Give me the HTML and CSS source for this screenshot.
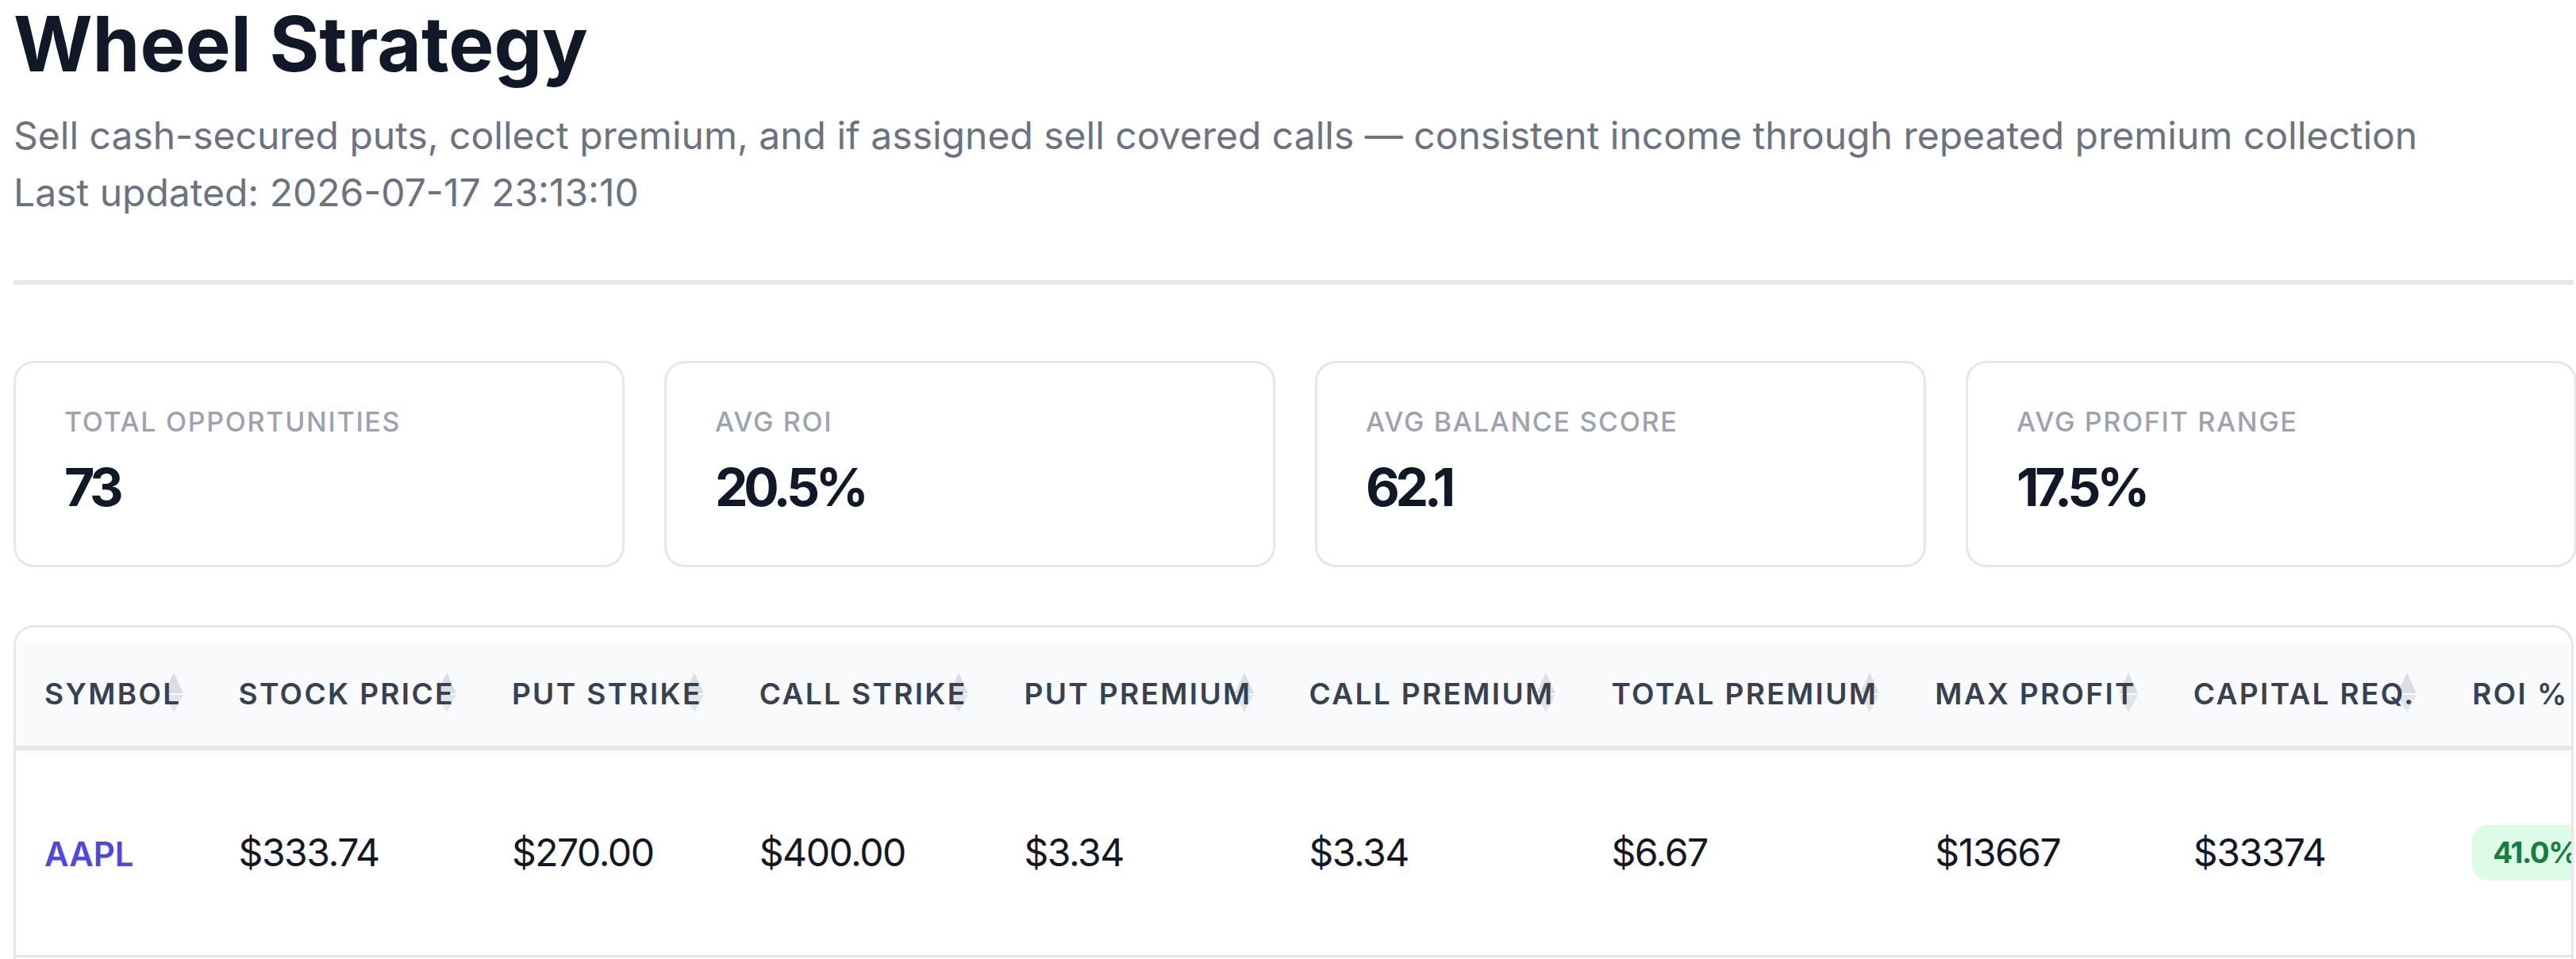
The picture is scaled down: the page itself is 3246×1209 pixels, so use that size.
FILE: index.html
```html
<!DOCTYPE html>
<html lang="en">
<head>
<meta charset="utf-8">
<title>Wheel Strategy</title>
<link rel="stylesheet" href="styles.css">
</head>
<body>
<div class="page">
  <header class="page-header">
    <h1 class="title">Wheel Strategy</h1>
    <p class="subtitle">Sell cash-secured puts, collect premium, and if assigned sell covered calls — consistent income through repeated premium collection</p>
    <p class="subtitle">Last updated: 2026-07-17 23:13:10</p>
  </header>
  <hr class="divider">
  <section class="stats">
    <div class="card">
      <div class="card-label">Total Opportunities</div>
      <div class="card-value">73</div>
    </div>
    <div class="card">
      <div class="card-label">Avg ROI</div>
      <div class="card-value">20.5%</div>
    </div>
    <div class="card">
      <div class="card-label">Avg Balance Score</div>
      <div class="card-value">62.1</div>
    </div>
    <div class="card">
      <div class="card-label">Avg Profit Range</div>
      <div class="card-value">17.5%</div>
    </div>
  </section>
  <div class="table-wrap">
    <table class="data-table">
      <thead>
        <tr>
          <th class="sortable">Symbol</th>
          <th class="sortable">Stock Price</th>
          <th class="sortable">Put Strike</th>
          <th class="sortable">Call Strike</th>
          <th class="sortable">Put Premium</th>
          <th class="sortable">Call Premium</th>
          <th class="sortable">Total Premium</th>
          <th class="sortable">Max Profit</th>
          <th class="sortable">Capital Req.</th>
          <th class="sortable">ROI %</th>
          <th class="sortable">Balance Score</th>
        </tr>
      </thead>
      <tbody>
        <tr>
          <td><a class="symbol">AAPL</a></td>
          <td>$333.74</td>
          <td>$270.00</td>
          <td>$400.00</td>
          <td>$3.34</td>
          <td>$3.34</td>
          <td>$6.67</td>
          <td>$13667</td>
          <td>$33374</td>
          <td><span class="badge">41.0%</span></td>
          <td>78.4</td>
        </tr>
        <tr>
          <td><a class="symbol">MSFT</a></td>
          <td>$512.30</td>
          <td>$430.00</td>
          <td>$600.00</td>
          <td>$4.12</td>
          <td>$3.98</td>
          <td>$8.10</td>
          <td>$17810</td>
          <td>$43810</td>
          <td><span class="badge">40.6%</span></td>
          <td>74.2</td>
        </tr>
      </tbody>
    </table>
  </div>
</div>
</body>
</html>
```
FILE: styles.css
```css
* { box-sizing: border-box; }
html, body { margin: 0; padding: 0; background: #ffffff; }
body {
  font-family: Inter, "Noto Sans", "Liberation Sans", sans-serif;
  color: #111827;
  overflow: hidden;
}
.page {
  padding: 7px 3px 0 17px;
}
.title {
  margin: 0 0 32px 0;
  font-size: 96px;
  line-height: 96px;
  font-weight: 700;
  color: #111827;
  letter-spacing: 0;
}
.subtitle {
  margin: 0;
  font-size: 48px;
  line-height: 72px;
  color: #6b7280;
}
.divider {
  margin: 74px 0 0 0;
  border: 0;
  height: 6px;
  background: #e5e7eb;
}
.stats {
  margin-top: 96px;
  display: grid;
  grid-template-columns: repeat(4, 769.5px);
  gap: 50.5px;
}
.card {
  height: 260px;
  border: 3px solid #e5e7eb;
  border-radius: 26px;
  padding: 53px 60px 0 61px;
  background: #fff;
}
.card-label {
  font-size: 34px;
  line-height: 41px;
  font-weight: 500;
  color: #9ca3af;
  text-transform: uppercase;
  letter-spacing: 0.05em;
  white-space: nowrap;
}
.card-value {
  margin-top: 22px;
  font-size: 66px;
  line-height: 80px;
  font-weight: 700;
  color: #111827;
  letter-spacing: -0.08em;
}
.table-wrap {
  margin-top: 73px;
  border: 3px solid #e5e7eb;
  border-radius: 26px;
  padding-top: 18px;
  overflow: hidden;
  background: #fff;
}
.data-table {
  border-collapse: collapse;
  white-space: nowrap;
}
.data-table th {
  position: relative;
  z-index: 0;
  height: 134px;
  padding: 0 36px;
  background: #f9fafb;
  border-bottom: 6px solid #e5e7eb;
  text-align: left;
  font-size: 37px;
  font-weight: 600;
  color: #374151;
  text-transform: uppercase;
  letter-spacing: 0.064em;
}
.sortable::before,
.sortable::after {
  content: "";
  position: absolute;
  z-index: -1;
  right: 34px;
  width: 0;
  height: 0;
  border-left: 12.5px solid transparent;
  border-right: 12.5px solid transparent;
}
.sortable::before {
  top: calc(50% - 27px);
  border-bottom: 26px solid #dadde1;
}
.sortable::after {
  top: calc(50% + 1px);
  border-top: 22px solid #e1e4e8;
}
.data-table td {
  height: 262px;
  padding: 0 36px;
  border-bottom: 3px solid #e5e7eb;
  font-size: 48px;
  color: #111827;
  vertical-align: middle;
  letter-spacing: -0.03em;
}
.symbol {
  font-size: 42px;
  font-weight: 600;
  color: #4f46e5;
  text-decoration: none;
  letter-spacing: 0;
}
.badge {
  display: inline-block;
  height: 70px;
  line-height: 70px;
  padding: 0 26px;
  border-radius: 20px;
  background: #dcfce7;
  color: #15803d;
  font-size: 37px;
  font-weight: 700;
  letter-spacing: -0.04em;
}
```
